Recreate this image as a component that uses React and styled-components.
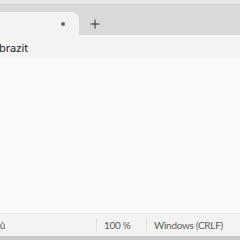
import React from 'react';
import styled, { createGlobalStyle } from 'styled-components';

const GlobalStyle = createGlobalStyle`
  html, body {
    margin: 0;
    padding: 0;
    background: #f9f9f9;
  }
  body {
    font-family: "Noto Sans", "Open Sans", sans-serif;
  }
`;

const Window = styled.div`
  width: 240px;
  height: 240px;
  display: flex;
  flex-direction: column;
  overflow: hidden;
  background: #f9f9f9;
`;

const TopEdge = styled.div`
  height: 4px;
  background: #e7e7e7;
  border-bottom: 1px solid #d2d2d2;
`;

const TabBar = styled.div`
  height: 30px;
  background: #d9d9d9;
  display: flex;
  align-items: flex-end;
`;

const Tab = styled.div`
  width: 79px;
  height: 23px;
  background: #f3f3f3;
  border-top-right-radius: 7px;
  display: flex;
  align-items: center;
  justify-content: flex-end;
  padding-right: 14px;
  box-sizing: border-box;
`;

const Dot = styled.span`
  width: 4px;
  height: 4px;
  border-radius: 50%;
  background: #666;
`;

const NewTab = styled.div`
  width: 32px;
  height: 23px;
  display: flex;
  align-items: center;
  justify-content: center;
  color: #333;
`;

const MenuBar = styled.div`
  height: 23px;
  background: #f3f3f3;
  display: flex;
  align-items: center;
  overflow: hidden;
`;

const MenuList = styled.div`
  display: flex;
  gap: 20px;
  margin-left: ${(p) => p.$offset}px;
  padding-top: 2px;
`;

const MenuItem = styled.span`
  font-size: 11px;
  color: #1b1b1b;
  white-space: nowrap;
`;

const Editor = styled.div`
  flex: 1;
  background: #f9f9f9;
`;

const StatusBar = styled.div`
  height: 22px;
  background: #f3f3f3;
  border-top: 1px solid #e8e8e8;
  display: flex;
  align-items: center;
  overflow: hidden;
`;

const StatusCell = styled.div`
  flex: 0 0 ${(p) => p.$width}px;
  box-sizing: border-box;
  padding-left: ${(p) => p.$pad ?? 7}px;
  font-family: Lato, "Noto Sans", sans-serif;
  font-size: 10px;
  letter-spacing: -0.3px;
  color: #5c5c5c;
  white-space: nowrap;
  border-left: ${(p) => (p.$sep ? '1px solid #e2e2e2' : 'none')};
  height: 14px;
  line-height: 14px;
`;

const Clipped = styled.span`
  margin-left: ${(p) => p.$offset}px;
`;

const BottomEdge = styled.div`
  height: 4px;
  background: #c9c9c9;
`;

const Plus = () => (
  <svg width="10" height="10" viewBox="0 0 10 10">
    <path d="M5 0.5V9.5M0.5 5H9.5" stroke="#333" strokeWidth="1" />
  </svg>
);

export default function App() {
  return (
    <>
      <GlobalStyle />
      <Window>
        <TopEdge />
        <TabBar>
          <Tab>
            <Dot />
          </Tab>
          <NewTab>
            <Plus />
          </NewTab>
        </TabBar>
        <MenuBar>
          <MenuList $offset={-14}>
            <MenuItem>Zobrazit</MenuItem>
          </MenuList>
        </MenuBar>
        <Editor />
        <StatusBar>
          <StatusCell $width={96} $pad={0}>
            <Clipped $offset={-27}>0 znaků</Clipped>
          </StatusCell>
          <StatusCell $width={50} $sep>100 %</StatusCell>
          <StatusCell $width={94} $sep>Windows (CRLF)</StatusCell>
        </StatusBar>
        <BottomEdge />
      </Window>
    </>
  );
}
